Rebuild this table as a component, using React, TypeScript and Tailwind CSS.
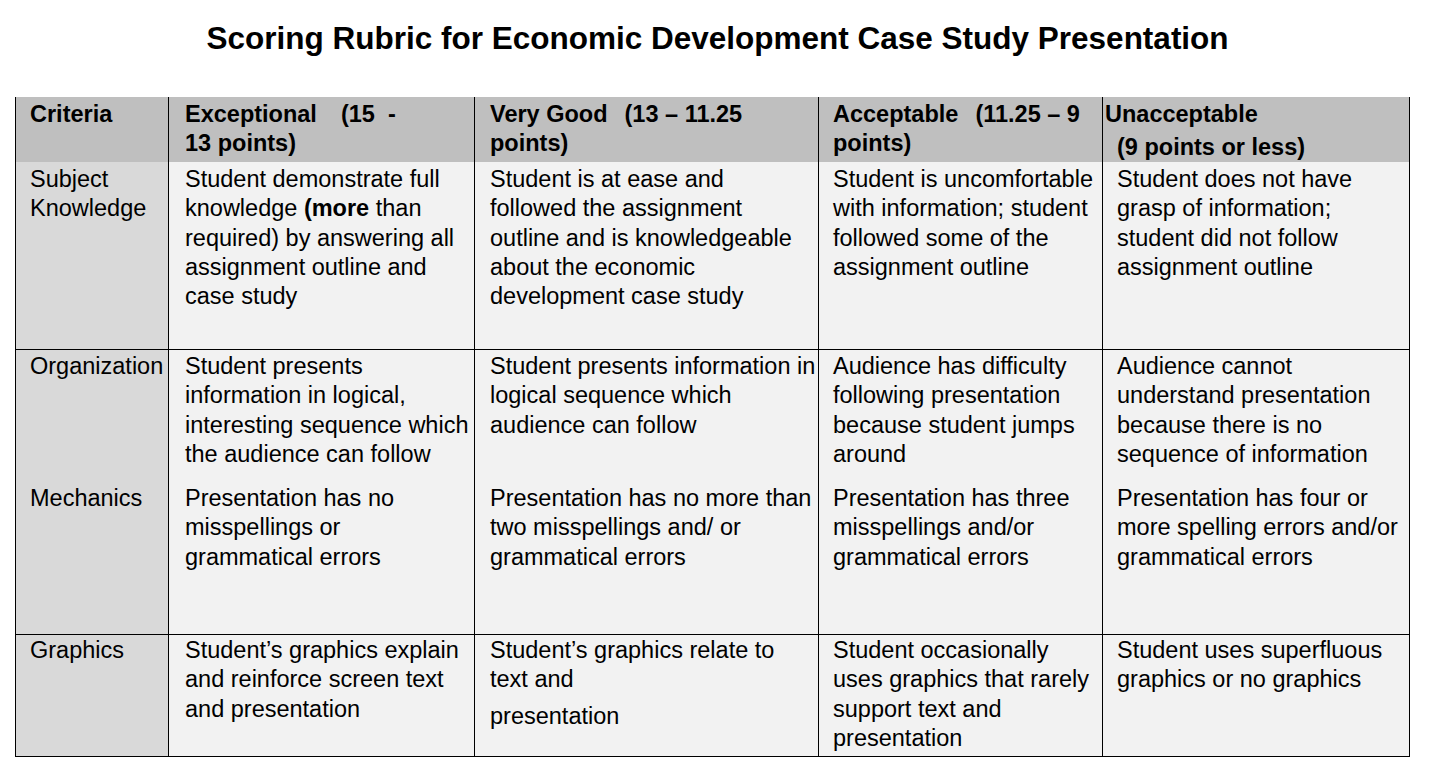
import React from "react";

type Line = React.ReactNode;

const GRID = "grid grid-cols-[153px_306px_344px_284px_307px]";

function Lines({ lines }: { lines: Line[] }) {
  return (
    <>
      {lines.map((l, i) => (
        <div key={i} className="whitespace-pre">
          {l}
        </div>
      ))}
    </>
  );
}

type RowProps = {
  cells: Line[][];
  h: string;
  pt: string;
  border: boolean;
};

function Row({ cells, h, pt, border }: RowProps) {
  return (
    <div className={`${GRID} ${h} ${border ? "border-b border-black" : ""}`}>
      {cells.map((c, i) => (
        <div
          key={i}
          className={`border-r border-black ${pt} ${
            i === 0 ? "bg-[#d9d9d9] pl-[14px]" : "bg-[#f2f2f2]"
          } ${i === 1 ? "pl-[16px]" : ""} ${i === 2 ? "pl-[15px]" : ""} ${
            i === 3 ? "pl-[14px]" : ""
          } ${i === 4 ? "pl-[14px]" : ""}`}
        >
          <Lines lines={c} />
        </div>
      ))}
    </div>
  );
}

export default function App() {
  return (
    <div className="w-[1441px] h-[776px] bg-white text-black font-['Liberation_Sans',Arial,sans-serif] overflow-hidden">
      <div className="pt-[20px] w-[1435px] text-center text-[31.5px] leading-[36px] font-bold">
        Scoring Rubric for Economic Development Case Study Presentation
      </div>
      <div className="mt-[41px] ml-[15px] w-[1395px] border-l border-black text-[23.5px] leading-[29.3px]">
        {/* Header */}
        <div className={`${GRID} h-[65px] bg-[#bfbfbf] font-bold`}>
          <div className="border-r border-black pt-[3px] pl-[14px]">Criteria</div>
          <div className="border-r border-black pt-[3px] pl-[16px]">
            <div className="whitespace-pre">
              Exceptional<span className="ml-[24px]">(15</span>
              <span className="ml-[13px]">-</span>
            </div>
            <div>13 points)</div>
          </div>
          <div className="border-r border-black pt-[3px] pl-[15px]">
            <div className="whitespace-pre">
              Very Good<span className="ml-[17px]">(13 – 11.25</span>
            </div>
            <div>points)</div>
          </div>
          <div className="border-r border-black pt-[3px] pl-[14px]">
            <div className="whitespace-pre">
              Acceptable<span className="ml-[17px]">(11.25 – 9</span>
            </div>
            <div>points)</div>
          </div>
          <div className="border-r border-black pt-[3px] pl-[2px]">
            <div>Unacceptable</div>
            <div className="pl-[12px] mt-[4px]">(9 points or less)</div>
          </div>
        </div>

        <Row
          h="h-[188px]"
          pt="pt-[3px]"
          border
          cells={[
            ["Subject", "Knowledge"],
            [
              "Student demonstrate full",
              <>
                knowledge <b>(more</b> than
              </>,
              "required) by answering all",
              "assignment outline and",
              "case study",
            ],
            [
              "Student is at ease and",
              "followed the assignment",
              "outline and is knowledgeable",
              "about the economic",
              "development case study",
            ],
            [
              "Student is uncomfortable",
              "with information; student",
              "followed some of the",
              "assignment outline",
            ],
            [
              "Student does not have",
              "grasp of information;",
              "student did not follow",
              "assignment outline",
            ],
          ]}
        />

        <Row
          h="h-[132px]"
          pt="pt-[2px]"
          border={false}
          cells={[
            ["Organization"],
            [
              "Student presents",
              "information in logical,",
              "interesting sequence which",
              "the audience can follow",
            ],
            [
              "Student presents information in",
              "logical sequence which",
              "audience can follow",
            ],
            [
              "Audience has difficulty",
              "following presentation",
              "because student jumps",
              "around",
            ],
            [
              "Audience cannot",
              "understand presentation",
              "because there is no",
              "sequence of information",
            ],
          ]}
        />

        <Row
          h="h-[153px]"
          pt="pt-[2px]"
          border
          cells={[
            ["Mechanics"],
            ["Presentation has no", "misspellings or", "grammatical errors"],
            [
              "Presentation has no more than",
              "two misspellings and/ or",
              "grammatical errors",
            ],
            ["Presentation has three", "misspellings and/or", "grammatical errors"],
            [
              "Presentation has four or",
              "more spelling errors and/or",
              "grammatical errors",
            ],
          ]}
        />

        <Row
          h="h-[122px]"
          pt="pt-[1px]"
          border
          cells={[
            ["Graphics"],
            [
              "Student’s graphics explain",
              "and reinforce screen text",
              "and presentation",
            ],
            [
              "Student’s graphics relate to",
              "text and",
              <span className="inline-block mt-[7px]">presentation</span>,
            ],
            [
              "Student occasionally",
              "uses graphics that rarely",
              "support text and",
              "presentation",
            ],
            ["Student uses superfluous", "graphics or no graphics"],
          ]}
        />
      </div>
    </div>
  );
}
